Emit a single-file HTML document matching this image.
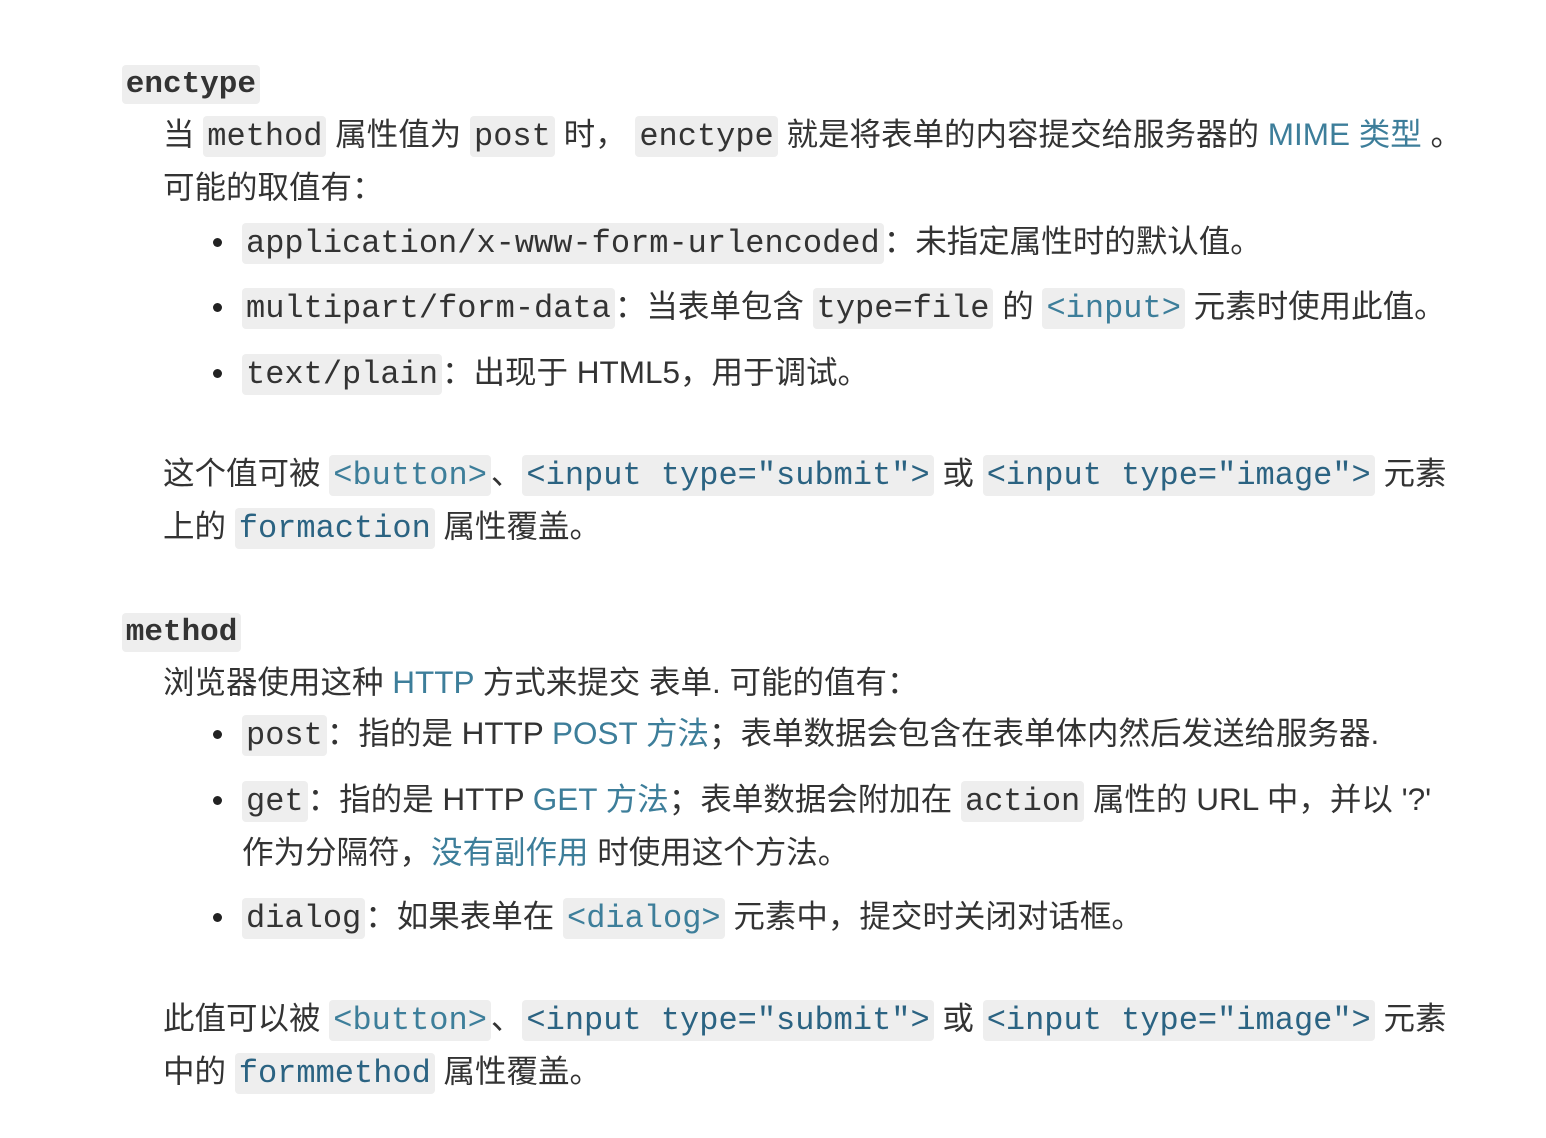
<!DOCTYPE html>
<html><head><meta charset="utf-8"><style>
body{margin:0;width:1546px;height:1138px;background:#fff;position:relative;overflow:hidden;
font-family:"Liberation Sans","Noto Sans CJK SC",sans-serif;font-size:31.5px;color:#333;}
.l{position:absolute;height:54px;line-height:54px;white-space:nowrap;}
code{font-family:"Liberation Mono",monospace;font-size:32px;background:#eee;border-radius:4px;padding:2px 4px;}
code.a{color:#2b6382;}
a{color:#3d7e9a;text-decoration:none;}
.h code{font-weight:bold;font-size:31px;color:#333;padding:2px 4px;}
.b{position:absolute;left:-29px;top:24px;width:9px;height:9px;border-radius:50%;background:#222;}
</style></head><body>
<div class="l h" style="left:122px;top:54px">&nbsp;<code style="margin-left:-9px">enctype</code></div>
<div class="l" style="left:163px;top:107px">当 <code>method</code> 属性值为 <code>post</code> 时， <code>enctype</code> 就是将表单的内容提交给服务器的 <a>MIME 类型</a> 。</div>
<div class="l" style="left:163px;top:160px">可能的取值有：</div>
<div class="l" style="left:242px;top:214px"><span class="b"></span><code>application/x-www-form-urlencoded</code>：未指定属性时的默认值。</div>
<div class="l" style="left:242px;top:279px"><span class="b"></span><code>multipart/form-data</code>：当表单包含 <code>type=file</code> 的 <code class="a" style="color:#3d7e9a">&lt;input&gt;</code> 元素时使用此值。</div>
<div class="l" style="left:242px;top:345px"><span class="b"></span><code>text/plain</code>：出现于 HTML5，用于调试。</div>
<div class="l" style="left:163px;top:446px">这个值可被 <code class="a" style="color:#3d7e9a">&lt;button&gt;</code>、<code class="a">&lt;input type="submit"&gt;</code> 或 <code class="a">&lt;input type="image"&gt;</code> 元素</div>
<div class="l" style="left:163px;top:499px">上的 <code class="a">formaction</code> 属性覆盖。</div>
<div class="l h" style="left:122px;top:602px">&nbsp;<code style="margin-left:-9px">method</code></div>
<div class="l" style="left:163px;top:655px">浏览器使用这种 <a>HTTP</a> 方式来提交 表单. 可能的值有：</div>
<div class="l" style="left:242px;top:706px"><span class="b"></span><code>post</code>：指的是 HTTP <a>POST 方法</a>；表单数据会包含在表单体内然后发送给服务器.</div>
<div class="l" style="left:242px;top:772px"><span class="b"></span><code>get</code>：指的是 HTTP <a>GET 方法</a>；表单数据会附加在 <code>action</code> 属性的 URL 中，并以 '?'</div>
<div class="l" style="left:242px;top:825px">作为分隔符，<a>没有副作用</a> 时使用这个方法。</div>
<div class="l" style="left:242px;top:889px"><span class="b"></span><code>dialog</code>：如果表单在 <code class="a" style="color:#3d7e9a">&lt;dialog&gt;</code> 元素中，提交时关闭对话框。</div>
<div class="l" style="left:163px;top:991px">此值可以被 <code class="a" style="color:#3d7e9a">&lt;button&gt;</code>、<code class="a">&lt;input type="submit"&gt;</code> 或 <code class="a">&lt;input type="image"&gt;</code> 元素</div>
<div class="l" style="left:163px;top:1044px">中的 <code class="a">formmethod</code> 属性覆盖。</div>
</body></html>
